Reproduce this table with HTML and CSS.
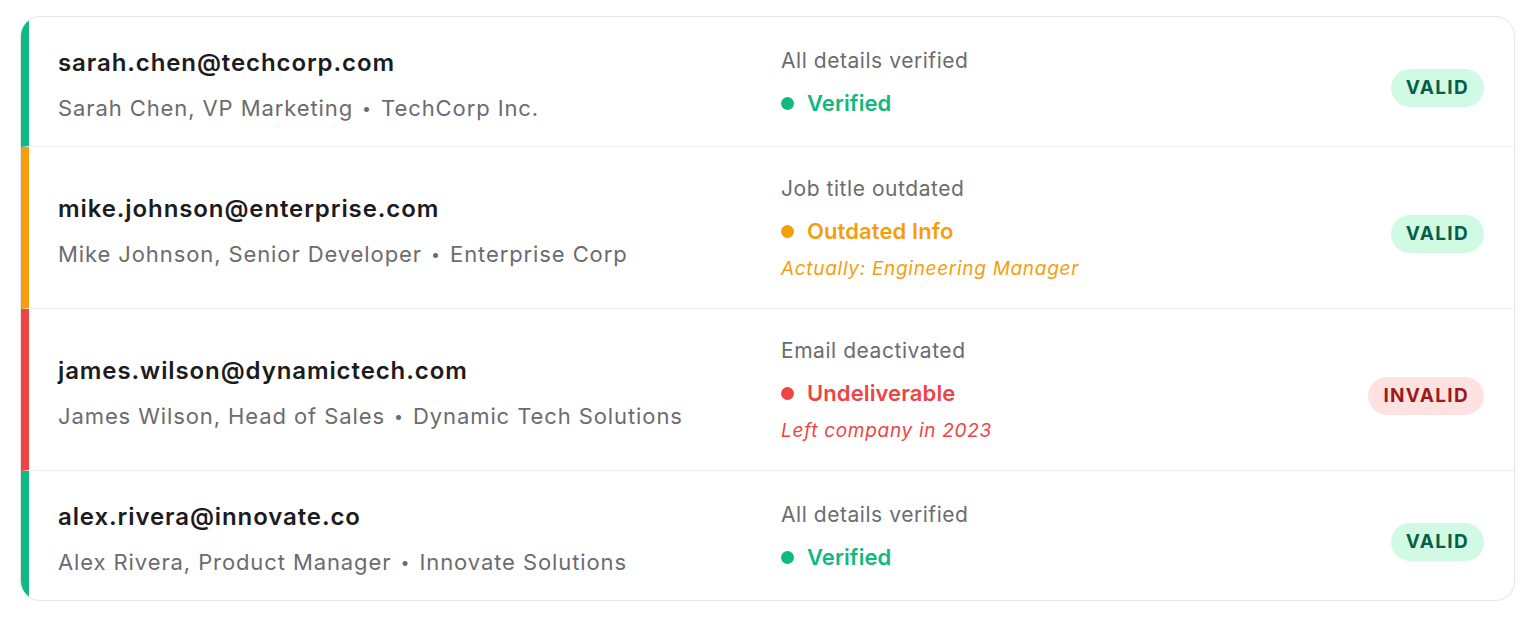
FILE: index.html
```html
<!DOCTYPE html>
<html lang="en">
<head>
<meta charset="utf-8">
<title>Contacts verification</title>
<link rel="stylesheet" href="styles.css">
</head>
<body>
<div class="card">
  <div class="row row-green">
    <div class="who">
      <div class="email">sarah.chen@techcorp.com</div>
      <div class="meta">Sarah Chen, VP Marketing <span class="sep">•</span> TechCorp Inc.</div>
    </div>
    <div class="status">
      <div class="label">All details verified</div>
      <div class="state green"><span class="dot"></span>Verified</div>
    </div>
    <div class="badge-cell"><span class="badge valid">VALID</span></div>
  </div>
  <div class="row row-orange">
    <div class="who">
      <div class="email">mike.johnson@enterprise.com</div>
      <div class="meta">Mike Johnson, Senior Developer <span class="sep">•</span> Enterprise Corp</div>
    </div>
    <div class="status">
      <div class="label">Job title outdated</div>
      <div class="state orange"><span class="dot"></span>Outdated Info</div>
      <div class="note orange">Actually: Engineering Manager</div>
    </div>
    <div class="badge-cell"><span class="badge valid">VALID</span></div>
  </div>
  <div class="row row-red">
    <div class="who">
      <div class="email">james.wilson@dynamictech.com</div>
      <div class="meta">James Wilson, Head of Sales <span class="sep">•</span> Dynamic Tech Solutions</div>
    </div>
    <div class="status">
      <div class="label">Email deactivated</div>
      <div class="state red"><span class="dot"></span>Undeliverable</div>
      <div class="note red">Left company in 2023</div>
    </div>
    <div class="badge-cell"><span class="badge invalid">INVALID</span></div>
  </div>
  <div class="row row-green">
    <div class="who">
      <div class="email">alex.rivera@innovate.co</div>
      <div class="meta">Alex Rivera, Product Manager <span class="sep">•</span> Innovate Solutions</div>
    </div>
    <div class="status">
      <div class="label">All details verified</div>
      <div class="state green"><span class="dot"></span>Verified</div>
    </div>
    <div class="badge-cell"><span class="badge valid">VALID</span></div>
  </div>
</div>
</body>
</html>
```
FILE: styles.css
```css
* { box-sizing: border-box; }
html, body { margin: 0; padding: 0; background: #ffffff; }
body {
  font-family: "Inter", "Liberation Sans", Arial, sans-serif;
  padding: 16px 21px 0 20px;
}
.card {
  border: 1.5px solid #e4e6e9;
  border-radius: 20px;
  overflow: hidden;
  background: #fff;
  box-shadow: 0 1px 3px rgba(0,0,0,0.04);
}
.row {
  display: grid;
  grid-template-columns: 723px 1fr 150px;
  align-items: center;
  padding: 27px 30px 26px 29px;
  border-left: 8px solid #10b981;
  border-bottom: 1.5px solid #eeeff1;
}
.row:last-child { border-bottom: none; }
.row-green { border-left-color: #10b981; }
.row-orange { border-left-color: #f59e0b; }
.row-red { border-left-color: #ef4444; }
.who { margin-top: 3px; margin-bottom: -3px; }
.email {
  font-size: 24px;
  font-weight: 600;
  color: #1c1c1e;
  line-height: 32px;
  letter-spacing: 0.9px;
}
.meta {
  margin-top: 14px;
  font-size: 22px;
  color: #6b6b70;
  line-height: 30px;
  letter-spacing: 0.9px;
}
.sep { margin: 0 2px; font-size: 16px; vertical-align: 2px; }
.label {
  font-size: 21px;
  color: #6b6b70;
  line-height: 30px;
  letter-spacing: 0.55px;
}
.state {
  margin-top: 12px;
  font-size: 22px;
  font-weight: 600;
  line-height: 30px;
  display: flex;
  align-items: center;
  letter-spacing: 0.1px;
}
.dot {
  width: 13px; height: 13px; border-radius: 50%;
  background: currentColor;
  margin: 0 13px 0 0;
}
.note {
  margin-top: 10px;
  font-size: 19px;
  font-style: italic;
  line-height: 26px;
  letter-spacing: 0.7px;
}
.green { color: #10b981; }
.orange { color: #f59e0b; }
.red { color: #ef4444; }
.badge-cell { display: flex; justify-content: flex-end; margin-top: 6px; margin-bottom: -6px; }
.badge {
  display: inline-block;
  font-size: 19px;
  font-weight: 700;
  letter-spacing: 1.3px;
  line-height: 38px;
  height: 38px;
  padding: 0 15px;
  border-radius: 19px;
}
.valid { background: #d1fae5; color: #065f46; }
.invalid { background: #fee2e2; color: #991b1b; }
```
